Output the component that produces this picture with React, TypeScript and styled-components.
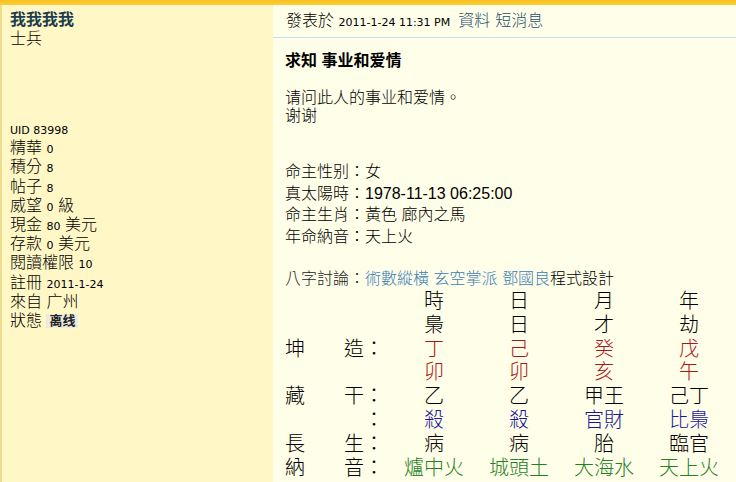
import React from "react";
import styled, { createGlobalStyle } from "styled-components";

const GlobalStyle = createGlobalStyle`
  html, body { margin: 0; padding: 0; }
  body {
    background: #fffee9;
    font-family: "Liberation Sans", "Noto Sans CJK TC", sans-serif;
    color: #000;
  }
`;

const cjk = `"Liberation Sans", "Noto Sans CJK TC", sans-serif`;
const small = `"DejaVu Sans", "Noto Sans CJK TC", sans-serif`;

const Page = styled.div`
  display: flex;
  flex-direction: column;
  min-height: 100vh;
`;

const TopBar = styled.div`
  height: 5px;
  background: linear-gradient(#f7c21f, #fdcd3a);
`;

const Columns = styled.div`
  flex: 1;
  display: flex;
  align-items: stretch;
`;

const Sidebar = styled.aside`
  width: 263px;
  flex: none;
  background: #fff7c6;
  border-left: 2px solid #eedc8e;
  padding: 4.5px 0 0 8px;
  font-family: ${cjk};
  font-size: 16px;
  font-weight: 300;
  color: #000;
`;

const UserName = styled.div`
  font-weight: bold;
  color: #1c3d4e;
  line-height: 19px;
`;

const Rank = styled.div`
  line-height: 19px;
`;

const Stats = styled.div`
  margin-top: 71.5px;
  line-height: 19.2px;
`;

const StatRow = styled.div`
  white-space: nowrap;
  height: 19.2px;
`;

const Num = styled.span`
  font-family: ${small};
  font-size: 11px;
  font-weight: normal;
  line-height: 1;
`;

const Badge = styled.span`
  display: inline-block;
  font-weight: bold;
  font-size: 13px;
  line-height: 14px;
  padding: 0 3px;
  background: #ecebe0;
  color: #222;
  vertical-align: 1px;
`;

const Main = styled.main`
  flex: 1;
  min-width: 0;
  background: #fffee9;
  font-family: ${cjk};
  font-size: 16px;
  font-weight: 300;
  color: #000;
`;

const PostHeader = styled.div`
  height: 33px;
  box-sizing: border-box;
  padding: 7px 0 0 13px;
  line-height: 18px;
  border-bottom: 1px solid #c6dfee;
  white-space: nowrap;
`;

const HeaderLink = styled.a<{ $gap?: number }>`
  color: #1d4f6e;
  text-decoration: none;
  margin-left: ${(p) => p.$gap ?? 0}px;
`;

const Body = styled.div`
  padding: 13px 0 0 12px;
`;

const Title = styled.h2`
  margin: 0;
  font-size: 16px;
  font-weight: bold;
  line-height: 20px;
`;

const Message = styled.div`
  margin-top: 18px;
  line-height: 18px;
`;

const Info = styled.div`
  margin-top: 36px;
  line-height: 21.5px;
`;

const Discuss = styled.div`
  margin-top: 22.75px;
  line-height: 18px;
  color: #222;
  white-space: nowrap;
`;

const DiscussLink = styled.a`
  color: #3a7db6;
  text-decoration: none;
`;

const Plain = styled.span`
  color: #000;
`;

const Chart = styled.div`
  display: grid;
  grid-template-columns: 59px 20px 27.5px repeat(4, 85px);
  grid-auto-rows: 23.9px;
  align-items: center;
  font-family: "Noto Sans CJK TC", sans-serif;
  font-size: 20px;
  line-height: 23.9px;
  font-weight: 300;
`;

type Tone = "black" | "red" | "blue" | "green";
const toneColor: Record<Tone, string> = {
  black: "#000",
  red: "#a81616",
  blue: "#18189a",
  green: "#1f821f",
};

const Label = styled.div`
  white-space: nowrap;
  color: #000;
`;

const Cell = styled.div<{ $tone: Tone }>`
  text-align: center;
  color: ${(p) => toneColor[p.$tone]};
  white-space: nowrap;
`;

const rows: { a: string; b: string; c: string; tone: Tone; v: string[] }[] = [
  { a: "", b: "", c: "", tone: "black", v: ["時", "日", "月", "年"] },
  { a: "", b: "", c: "", tone: "black", v: ["梟", "日", "才", "劫"] },
  { a: "坤", b: "造", c: "：", tone: "red", v: ["丁", "己", "癸", "戊"] },
  { a: "", b: "", c: "", tone: "red", v: ["卯", "卯", "亥", "午"] },
  { a: "藏", b: "干", c: "：", tone: "black", v: ["乙", "乙", "甲王", "己丁"] },
  { a: "", b: "", c: "：", tone: "blue", v: ["殺", "殺", "官財", "比梟"] },
  { a: "長", b: "生", c: "：", tone: "black", v: ["病", "病", "胎", "臨官"] },
  { a: "納", b: "音", c: "：", tone: "green", v: ["爐中火", "城頭土", "大海水", "天上火"] },
];

export default function App() {
  return (
    <Page>
      <GlobalStyle />
      <TopBar />
      <Columns>
        <Sidebar>
          <UserName>我我我我</UserName>
          <Rank>士兵</Rank>
          <Stats>
            <StatRow><Num>UID 83998</Num></StatRow>
            <StatRow>精華 <Num>0</Num></StatRow>
            <StatRow>積分 <Num>8</Num></StatRow>
            <StatRow>帖子 <Num>8</Num></StatRow>
            <StatRow>威望 <Num>0</Num> 級</StatRow>
            <StatRow>現金 <Num>80</Num> 美元</StatRow>
            <StatRow>存款 <Num>0</Num> 美元</StatRow>
            <StatRow>閱讀權限 <Num>10</Num></StatRow>
            <StatRow>註冊 <Num>2011-1-24</Num></StatRow>
            <StatRow>來自 广州</StatRow>
            <StatRow>狀態 <Badge>离线</Badge></StatRow>
          </Stats>
        </Sidebar>
        <Main>
          <PostHeader>
            發表於 <Num>2011-1-24 11:31 PM</Num>
            <HeaderLink href="#" $gap={8}>資料</HeaderLink>
            <HeaderLink href="#" $gap={5}>短消息</HeaderLink>
          </PostHeader>
          <Body>
            <Title>求知 事业和爱情</Title>
            <Message>
              <div>请问此人的事业和爱情。</div>
              <div>谢谢</div>
            </Message>
            <Info>
              <div>命主性别：女</div>
              <div>真太陽時：1978-11-13 06:25:00</div>
              <div>命主生肖：黃色 廊內之馬</div>
              <div>年命納音：天上火</div>
            </Info>
            <Discuss>
              八字討論：<DiscussLink href="#">術數縱橫</DiscussLink>{" "}
              <DiscussLink href="#">玄空掌派</DiscussLink>{" "}
              <DiscussLink href="#">鄧國良</DiscussLink>
              <Plain>程式設計</Plain>
            </Discuss>
            <Chart>
              {rows.map((r, i) => (
                <React.Fragment key={i}>
                  <Label>{r.a}</Label>
                  <Label>{r.b}</Label>
                  <Label>{r.c}</Label>
                  {r.v.map((t, j) => (
                    <Cell key={j} $tone={r.tone}>{t}</Cell>
                  ))}
                </React.Fragment>
              ))}
            </Chart>
          </Body>
        </Main>
      </Columns>
    </Page>
  );
}
